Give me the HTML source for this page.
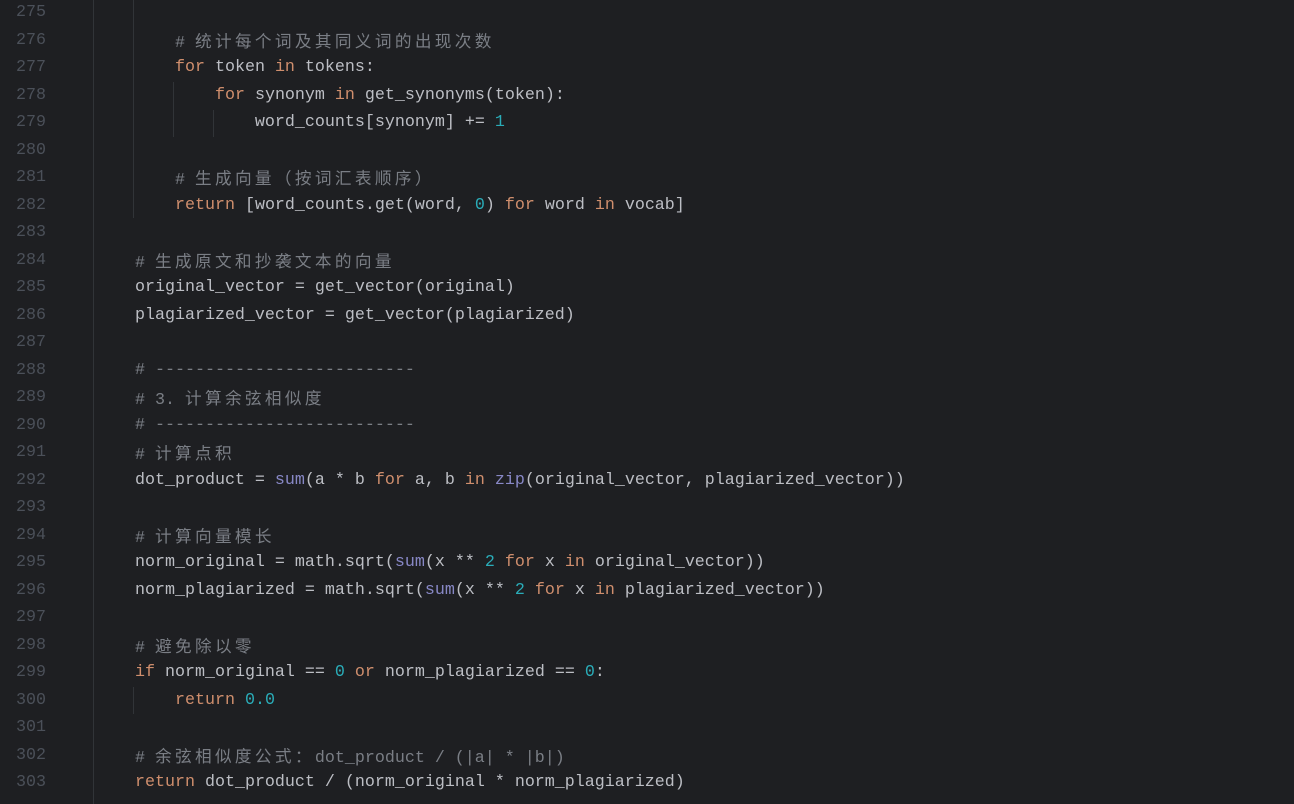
<!DOCTYPE html>
<html><head><meta charset="utf-8"><style>
html,body{margin:0;padding:0;background:#1e1f22;width:1294px;height:804px;overflow:hidden}
.ln{position:absolute;left:0;width:46px;text-align:right;color:#4b5059;font:16.67px/27.5px "Liberation Mono",monospace}
.cd{position:absolute;left:95px;white-space:pre;color:#bcbec4;font:16.67px/27.5px "Liberation Mono","Noto Sans CJK SC",monospace}
.k{color:#cf8e6d}.n{color:#2aacb8}.b{color:#8888c6}.m{color:#7a7e85}
.c{font-family:"Noto Sans CJK SC",sans-serif;letter-spacing:3.33px}
.g{position:absolute;width:1px;background:#313438}
</style></head><body>
<div class="g" style="left:93px;top:0;height:804px"></div>
<div class="g" style="left:133px;top:0;height:218px"></div>
<div class="g" style="left:173px;top:82px;height:55px"></div>
<div class="g" style="left:213px;top:110px;height:27px"></div>
<div class="g" style="left:133px;top:687px;height:27px"></div>
<div id="w"></div>
<script>
var L=[
"",
"        <span class=m># <span class=c>统计每个词及其同义词的出现次数</span></span>",
"        <span class=k>for</span> token <span class=k>in</span> tokens:",
"            <span class=k>for</span> synonym <span class=k>in</span> get_synonyms(token):",
"                word_counts[synonym] += <span class=n>1</span>",
"",
"        <span class=m># <span class=c>生成向量（按词汇表顺序）</span></span>",
"        <span class=k>return</span> [word_counts.get(word, <span class=n>0</span>) <span class=k>for</span> word <span class=k>in</span> vocab]",
"",
"    <span class=m># <span class=c>生成原文和抄袭文本的向量</span></span>",
"    original_vector = get_vector(original)",
"    plagiarized_vector = get_vector(plagiarized)",
"",
"    <span class=m># --------------------------</span>",
"    <span class=m># 3. <span class=c>计算余弦相似度</span></span>",
"    <span class=m># --------------------------</span>",
"    <span class=m># <span class=c>计算点积</span></span>",
"    dot_product = <span class=b>sum</span>(a * b <span class=k>for</span> a, b <span class=k>in</span> <span class=b>zip</span>(original_vector, plagiarized_vector))",
"",
"    <span class=m># <span class=c>计算向量模长</span></span>",
"    norm_original = math.sqrt(<span class=b>sum</span>(x ** <span class=n>2</span> <span class=k>for</span> x <span class=k>in</span> original_vector))",
"    norm_plagiarized = math.sqrt(<span class=b>sum</span>(x ** <span class=n>2</span> <span class=k>for</span> x <span class=k>in</span> plagiarized_vector))",
"",
"    <span class=m># <span class=c>避免除以零</span></span>",
"    <span class=k>if</span> norm_original == <span class=n>0</span> <span class=k>or</span> norm_plagiarized == <span class=n>0</span>:",
"        <span class=k>return</span> <span class=n>0.0</span>",
"",
"    <span class=m># <span class=c>余弦相似度公式：</span>dot_product / (|a| * |b|)</span>",
"    <span class=k>return</span> dot_product / (norm_original * norm_plagiarized)"
];
var h="";
for(var i=0;i<L.length;i++){var t=(-0.75+i*27.5).toFixed(2);
h+='<div class="ln" style="top:'+t+'px">'+(275+i)+'</div><div class="cd" style="top:'+t+'px">'+L[i]+'</div>';}
document.getElementById("w").innerHTML=h;
</script>
</body></html>
